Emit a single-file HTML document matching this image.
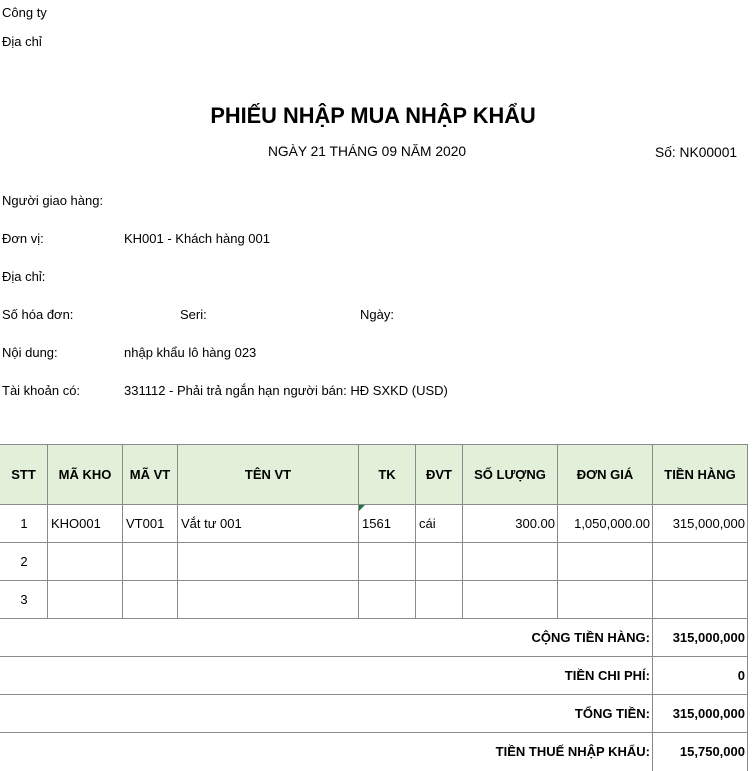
<!DOCTYPE html>
<html><head><meta charset="utf-8"><style>
body{margin:0;width:756px;height:766px;overflow:hidden;background:#fff;font-family:"Liberation Sans",Arial,sans-serif;font-size:13px;color:#000;position:relative}
.t{position:absolute;white-space:nowrap;line-height:16px}
table{position:absolute;left:-1px;top:444px;border-collapse:collapse;table-layout:fixed}
td{border:1px solid #8a8a8a;padding:0 2px 0 3px;height:38px;box-sizing:border-box;font-size:13px;white-space:nowrap;overflow:hidden}
th{border:1px solid #8a8a8a;background:#e2f0d9;height:60px;font-size:13px;font-weight:bold;box-sizing:border-box}
tr{height:38px}
tr.h{height:60px}
.c{text-align:center}.r{text-align:right}.b{font-weight:bold}
</style></head><body>
<div class="t" style="left:2px;top:5px">Công ty</div>
<div class="t" style="left:2px;top:34px">Địa chỉ</div>
<div class="t" style="left:0;width:746px;text-align:center;top:103px;font-size:21.8px;font-weight:bold;line-height:26px">PHIẾU NHẬP MUA NHẬP KHẨU</div>
<div class="t" style="left:0;width:734px;text-align:center;top:144px;font-size:13.8px">NGÀY 21 THÁNG 09 NĂM 2020</div>
<div class="t" style="left:655px;top:145px;font-size:13.8px">Số: NK00001</div>
<div class="t" style="left:2px;top:193px">Người giao hàng:</div>
<div class="t" style="left:2px;top:231px">Đơn vị:</div>
<div class="t" style="left:124px;top:231px">KH001 - Khách hàng 001</div>
<div class="t" style="left:2px;top:269px">Địa chỉ:</div>
<div class="t" style="left:2px;top:307px">Số hóa đơn:</div>
<div class="t" style="left:180px;top:307px">Seri:</div>
<div class="t" style="left:360px;top:307px">Ngày:</div>
<div class="t" style="left:2px;top:345px">Nội dung:</div>
<div class="t" style="left:124px;top:345px">nhập khẩu lô hàng 023</div>
<div class="t" style="left:2px;top:383px">Tài khoản có:</div>
<div class="t" style="left:124px;top:383px">331112 - Phải trả ngắn hạn người bán: HĐ SXKD (USD)</div>
<table>
<colgroup><col style="width:48px"><col style="width:75px"><col style="width:55px"><col style="width:181px"><col style="width:57px"><col style="width:47px"><col style="width:95px"><col style="width:95px"><col style="width:95px"></colgroup>
<tr class="h"><th>STT</th><th>MÃ KHO</th><th>MÃ VT</th><th>TÊN VT</th><th>TK</th><th>ĐVT</th><th>SỐ LƯỢNG</th><th>ĐƠN GIÁ</th><th>TIỀN HÀNG</th></tr>
<tr><td class="c">1</td><td>KHO001</td><td>VT001</td><td>Vắt tư 001</td><td style="position:relative">1561<span style="position:absolute;left:0;top:0;width:0;height:0;border-top:6px solid #217346;border-right:6px solid transparent"></span></td><td>cái</td><td class="r">300.00</td><td class="r">1,050,000.00</td><td class="r">315,000,000</td></tr>
<tr><td class="c">2</td><td></td><td></td><td></td><td></td><td></td><td></td><td></td><td></td></tr>
<tr><td class="c">3</td><td></td><td></td><td></td><td></td><td></td><td></td><td></td><td></td></tr>
<tr><td colspan="8" class="r b">CỘNG TIỀN HÀNG:</td><td class="r b">315,000,000</td></tr>
<tr><td colspan="8" class="r b">TIỀN CHI PHÍ:</td><td class="r b">0</td></tr>
<tr><td colspan="8" class="r b">TỔNG TIỀN:</td><td class="r b">315,000,000</td></tr>
<tr><td colspan="8" class="r b" style="border-bottom:none">TIỀN THUẾ NHẬP KHẨU:</td><td class="r b" style="border-bottom:none">15,750,000</td></tr>
</table>
</body></html>
